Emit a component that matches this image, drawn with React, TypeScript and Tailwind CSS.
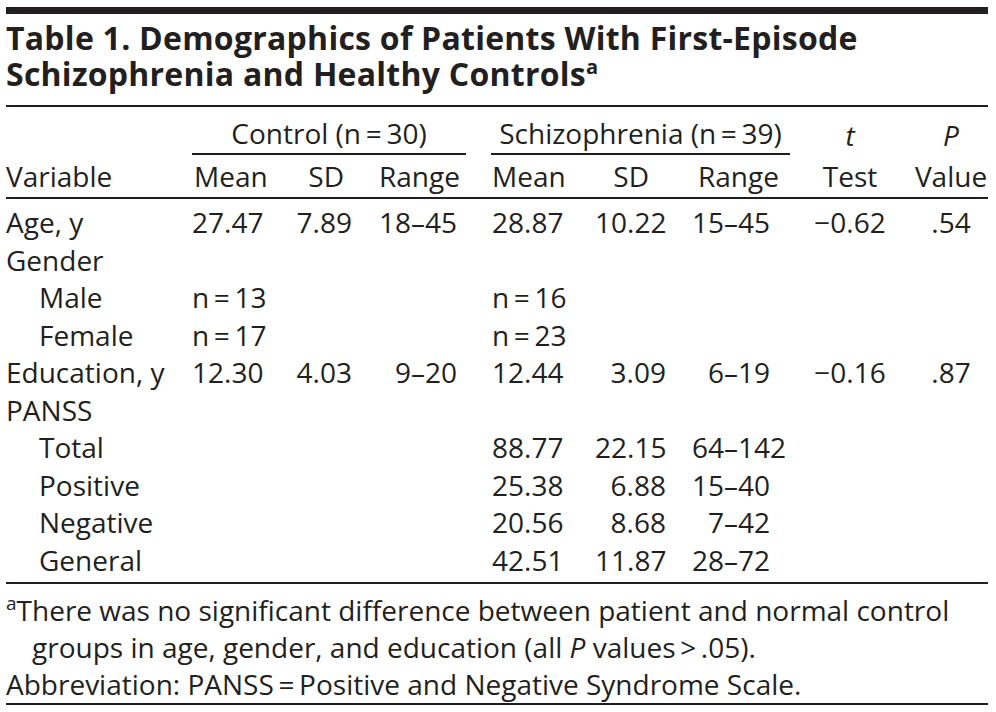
import React from 'react';

type Row = {
  label: string;
  indent?: boolean;
  cm?: string;
  csd?: string;
  cr?: [string, string];
  sm?: string;
  ssd?: string;
  sr?: [string, string];
  t?: string;
  p?: string;
};

const rows: Row[] = [
  { label: 'Age, y', cm: '27.47', csd: '7.89', cr: ['18', '45'], sm: '28.87', ssd: '10.22', sr: ['15', '45'], t: '\u22120.62', p: '.54' },
  { label: 'Gender' },
  { label: 'Male', indent: true, cm: 'n\u2009=\u200913', sm: 'n\u2009=\u200916' },
  { label: 'Female', indent: true, cm: 'n\u2009=\u200917', sm: 'n\u2009=\u200923' },
  { label: 'Education, y', cm: '12.30', csd: '4.03', cr: ['9', '20'], sm: '12.44', ssd: '3.09', sr: ['6', '19'], t: '\u22120.16', p: '.87' },
  { label: 'PANSS' },
  { label: 'Total', indent: true, sm: '88.77', ssd: '22.15', sr: ['64', '142'] },
  { label: 'Positive', indent: true, sm: '25.38', ssd: '6.88', sr: ['15', '40'] },
  { label: 'Negative', indent: true, sm: '20.56', ssd: '8.68', sr: ['7', '42'] },
  { label: 'General', indent: true, sm: '42.51', ssd: '11.87', sr: ['28', '72'] },
];

const grid = 'grid grid-cols-[184px_100px_70px_118px_117px_80px_120px_110px_83px]';

function RangeCell({ value, lead }: { value?: [string, string]; lead: string }) {
  if (!value) return <div />;
  return (
    <div className="flex">
      <span className={`${lead} text-right`}>{value[0]}</span>
      <span>–</span>
      <span>{value[1]}</span>
    </div>
  );
}

export default function App() {
  return (
    <div className="min-h-screen bg-white text-[#231f20] font-['Open_Sans',sans-serif]">
      <div className="ml-[6px] w-[982px] pt-[7px]">
        <div className="h-[7px] bg-[#231f20]" />

        {/* Title */}
        <div className="pt-[6px] pb-[14px] border-b-2 border-[#231f20] text-[32px] leading-[35.5px] font-bold tracking-[0.25px]">
          <div>Table 1. Demographics of Patients With First-Episode</div>
          <div>
            Schizophrenia and Healthy Controls
            <span className="relative -top-[12px] text-[20px] leading-none align-baseline">a</span>
          </div>
        </div>

        {/* Header */}
        <div className="text-[28px] leading-[37.5px] border-b-2 border-[#231f20] pb-[2px]">
          <div className={`${grid} pt-[8px] items-end`}>
            <div />
            <div className="col-span-3 ml-[2px] mr-[12px] border-b-2 border-[#231f20] text-center">
              Control (n{'\u2009'}={'\u2009'}30)
            </div>
            <div className="col-span-3 ml-[13px] mr-[5px] border-b-2 border-[#231f20] text-center">
              Schizophrenia (n{'\u2009'}={'\u2009'}39)
            </div>
            <div className="text-center italic">t</div>
            <div className="text-center italic pl-[9px]">P</div>
          </div>
          <div className={`${grid} pt-[3px]`}>
            <div>Variable</div>
            <div className="pl-[4px]">Mean</div>
            <div className="text-right pr-[16px]">SD</div>
            <div className="pl-[19px]">Range</div>
            <div className="pl-[14px]">Mean</div>
            <div className="text-right pr-[26px]">SD</div>
            <div className="pl-[23px]">Range</div>
            <div className="text-center">Test</div>
            <div className="text-center pl-[9px]">Value</div>
          </div>
        </div>

        {/* Body */}
        <div className="text-[28px] leading-[37.5px] pt-[5px] pb-[3px] border-b-2 border-[#231f20]">
          {rows.map((r) => (
            <div key={r.label} className={grid}>
              <div className={r.indent ? 'pl-[33px]' : ''}>{r.label}</div>
              <div className="pl-[2px]">{r.cm}</div>
              <div className="text-right pr-[8px]">{r.csd}</div>
              <RangeCell value={r.cr} lead="w-[51px]" />
              <div className="pl-[14px]">{r.sm}</div>
              <div className="text-right pr-[9px]">{r.ssd}</div>
              <RangeCell value={r.sr} lead="w-[49px]" />
              <div className="text-center">{r.t}</div>
              <div className="text-center pl-[9px]">{r.p}</div>
            </div>
          ))}
        </div>

        {/* Footnotes */}
        <div className="text-[28px] leading-[37px] pt-[8px] pb-[0px] border-b-2 border-[#231f20]">
          <div>
            <span className="relative -top-[11px] text-[19px] leading-none">a</span>There was no significant difference between patient and normal control
          </div>
          <div className="pl-[26px]">
            groups in age, gender, and education (all <i>P</i> values{'\u2009'}&gt;{'\u2009'}.05).
          </div>
          <div>Abbreviation: PANSS{'\u2009'}={'\u2009'}Positive and Negative Syndrome Scale.</div>
        </div>
      </div>
    </div>
  );
}
